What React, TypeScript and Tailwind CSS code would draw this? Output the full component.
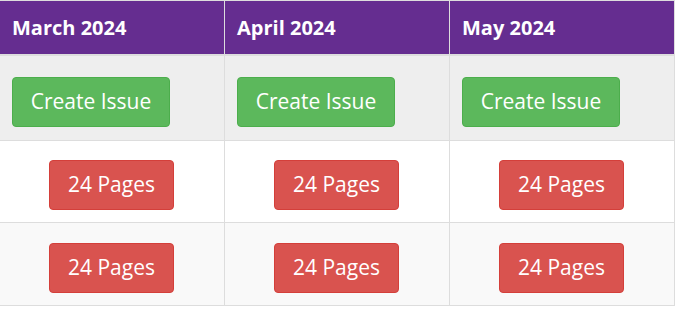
export default function App() {
  const months = ['March 2024', 'April 2024', 'May 2024'];

  return (
    <div className="w-[676px] h-[309px] bg-white font-['Open_Sans',sans-serif]">
      <div className="w-[675px] border-t border-[#ddd]">
        {/* header */}
        <div className="grid grid-cols-3 h-[55px] bg-[#652d90] border-b-2 border-[#ddd]">
          {months.map(m => (
            <div key={m} className="flex items-center px-3 border-r border-[#ddd] text-white text-[20px] font-bold">
              {m}
            </div>
          ))}
        </div>

        {/* create row */}
        <div className="grid grid-cols-3 h-[85px] bg-[#eee] border-b border-[#ddd]">
          {months.map(m => (
            <div key={m} className="pt-[21px] px-3 border-r border-[#ddd]">
              <button className="w-[158px] h-[50px] rounded border border-[#4cae4c] bg-[#5cb85c] text-white text-[21px]">
                Create Issue
              </button>
            </div>
          ))}
        </div>

        {/* pages rows */}
        <div className="grid grid-cols-3 h-[82px] bg-white border-b border-[#ddd]">
          {months.map(m => (
            <div key={m} className="pt-[19px] pl-[49px] border-r border-[#ddd]">
              <button className="w-[125px] h-[50px] rounded border border-[#d43f3a] bg-[#d9534f] text-white text-[21px]">
                24 Pages
              </button>
            </div>
          ))}
        </div>
        <div className="grid grid-cols-3 h-[83px] bg-[#f9f9f9] border-b border-[#ddd]">
          {months.map(m => (
            <div key={m} className="pt-[20px] pl-[49px] border-r border-[#ddd]">
              <button className="w-[125px] h-[50px] rounded border border-[#d43f3a] bg-[#d9534f] text-white text-[21px]">
                24 Pages
              </button>
            </div>
          ))}
        </div>
      </div>
    </div>
  );
}
